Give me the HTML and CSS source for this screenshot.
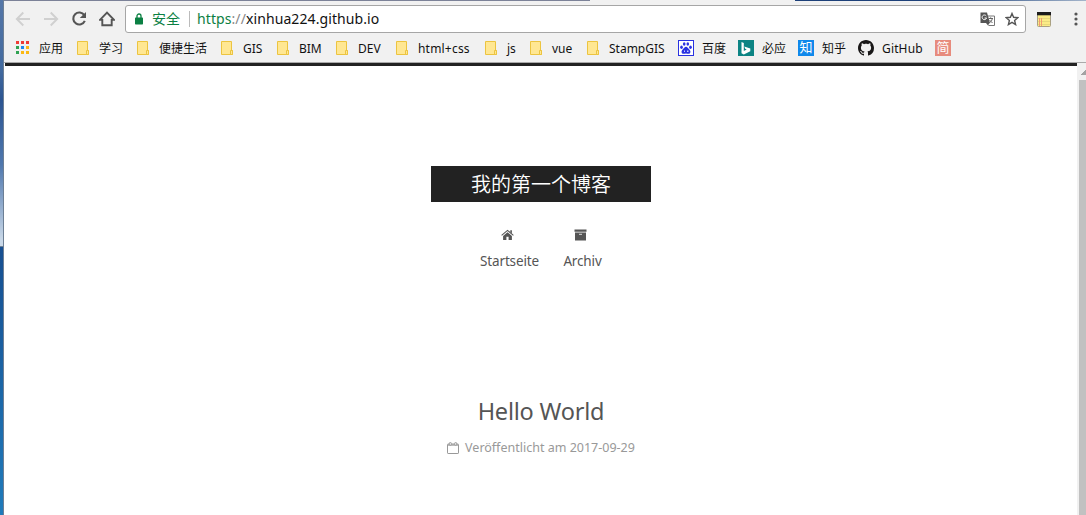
FILE: index.html
```
<!DOCTYPE html>
<html lang="de">
<head>
<meta charset="utf-8">
<title>我的第一个博客</title>
<link rel="stylesheet" href="styles.css">
</head>
<body>
<svg class="defs" width="0" height="0" aria-hidden="true">
  <symbol id="folder" viewBox="0 0 16 16"><path d="M2.500 1.500h10v9h1v4h-11z" fill="#ffe793" stroke="#ecc440"/><path d="M11.500 14.500v-4h2v4z" fill="#ffe793" stroke="#ecc440"/></symbol>
</svg>
<div class="screen">
  <div class="desktop"><div class="desktop-top"></div><div class="desktop-bottom"></div></div>
  <div class="browser">
    <div class="frame"><span class="frame-a"></span><span class="frame-tab"></span><span class="frame-b"></span></div>
    <div class="toolbar">
      <svg class="nav" width="16" height="16" viewBox="0 0 16 16"><path d="M15 8H2M8.300 1.500L1.800 8l6.500 6.500" fill="none" stroke="#d0d0d0" stroke-width="1.900"/></svg>
      <svg class="nav" width="16" height="16" viewBox="0 0 16 16"><path d="M1 8h13M7.700 1.500L14.200 8l-6.500 6.500" fill="none" stroke="#d0d0d0" stroke-width="1.900"/></svg>
      <svg class="nav" width="16" height="16" viewBox="0 0 16 16"><path d="M13.300 4.200A6 6 0 1 0 13.800 9.900" fill="none" stroke="#555" stroke-width="2.100"/><path d="M15 .9v6.200H8.800z" fill="#555"/></svg>
      <svg class="nav" width="16" height="16" viewBox="0 0 16 16"><path d="M1 8.900L8 1.700l7 7.200h-2.300v5.400H3.300V8.900z" fill="none" stroke="#555" stroke-width="1.900"/></svg>
      <div class="omnibox">
        <svg class="lock" width="8" height="12" viewBox="0 0 8 12"><path d="M2 5V3a2 2 0 0 1 4 0v2" fill="none" stroke="#0b8043" stroke-width="1.300"/><rect y="4.500" width="8" height="7" rx=".7" fill="#0b8043"/></svg>
        <span class="secure">安全</span>
        <span class="url"><span class="scheme">https</span><span class="slashes">://</span>xinhua224.github.io</span>
        <svg class="translate" width="15" height="15" viewBox="0 0 15 15"><path d="M7 4h7.500v9.500H8.500" fill="#fff" stroke="#777"/><path d="M.5.500h6.500l3 10.500H.5z" fill="#555"/><path d="M6.300 4A2.300 2.300 0 1 0 6.600 6H4.500" fill="none" stroke="#fff" stroke-width="1"/><path d="M8.500 6.500h4.500M10.700 5.300v1.200M12.300 6.500C12 9 10.500 10 9 11M9.500 8l3 3" fill="none" stroke="#666"/><path d="M6 11h3.500L8 13.500z" fill="#555"/></svg>
        <svg class="star" width="14" height="14" viewBox="0 0 14 14"><path d="M7 1.500l1.600 3.800 4.200.4-3.200 2.800 1 4.100L7 10.400l-3.600 2.200 1-4.100L1.200 5.700l4.200-.4z" fill="none" stroke="#555" stroke-width="1.400"/></svg>
      </div>
      <svg class="notes" width="14" height="15" viewBox="0 0 14 15"><rect x=".5" y=".5" width="13" height="14" rx="1" fill="#fbec87" stroke="#aaa183"/><path d="M0 0h14v3.300H0z" fill="#1c1c1c"/><path d="M1 6.500h12M1 9.500h12M1 12.500h12" stroke="#e6d97c"/><path d="M2.500 6v8M4.500 6v8" stroke="#f29b72"/></svg>
      <svg class="more" width="4" height="14" viewBox="0 0 4 14"><circle cx="2" cy="2" r="1.600" fill="#555"/><circle cx="2" cy="7" r="1.600" fill="#555"/><circle cx="2" cy="12" r="1.600" fill="#555"/></svg>
    </div>
    <div class="bookmarks">
      <div class="mark"><svg width="16" height="16" viewBox="0 0 16 16"><path d="M1 1h3v3H1zM6 1h3v3H6zM11 1h3v3h-3z" fill="#f03c36"/><path d="M1 6h3v3H1zM1 11h3v3H1z" fill="#2fa252"/><path d="M6 6h3v3H6z" fill="#1e88f0"/><path d="M11 6h3v3h-3zM6 11h3v3H6zM11 11h3v3h-3z" fill="#fbb813"/></svg><span class="w24">应用</span></div>
      <div class="mark"><svg width="16" height="16"><use href="#folder"/></svg><span class="w24">学习</span></div>
      <div class="mark"><svg width="16" height="16"><use href="#folder"/></svg><span class="w48">便捷生活</span></div>
      <div class="mark"><svg width="16" height="16"><use href="#folder"/></svg><span class="w20">GIS</span></div>
      <div class="mark"><svg width="16" height="16"><use href="#folder"/></svg><span class="w23">BIM</span></div>
      <div class="mark"><svg width="16" height="16"><use href="#folder"/></svg><span class="w24">DEV</span></div>
      <div class="mark"><svg width="16" height="16"><use href="#folder"/></svg><span class="w53">html+css</span></div>
      <div class="mark"><svg width="16" height="16"><use href="#folder"/></svg><span class="w9">js</span></div>
      <div class="mark"><svg width="16" height="16"><use href="#folder"/></svg><span class="w21">vue</span></div>
      <div class="mark"><svg width="16" height="16"><use href="#folder"/></svg><span class="w57">StampGIS</span></div>
      <div class="mark"><svg width="16" height="16" viewBox="0 0 16 16"><rect x=".5" y=".5" width="15" height="15" fill="#fff" stroke="#2932e1"/><g fill="#2932e1"><ellipse cx="3.500" cy="7.300" rx="1.300" ry="1.700"/><ellipse cx="6.200" cy="4" rx="1.300" ry="1.800"/><ellipse cx="9.800" cy="4" rx="1.300" ry="1.800"/><ellipse cx="12.500" cy="7.300" rx="1.300" ry="1.700"/><path d="M8 6.800c1.500 0 2 1.500 3.300 2.700 2 1.800 1.200 4.300-.8 4.300-1 0-1.500-.3-2.500-.3s-1.500.3-2.500.3c-2 0-2.800-2.500-.8-4.300C6 8.300 6.500 6.800 8 6.800z"/></g><path d="M6 10.500h1v1.500H6zM9 10.500h1.500V12H9z" fill="#c8caff"/></svg><span class="w24">百度</span></div>
      <div class="mark"><svg width="16" height="16" viewBox="0 0 16 16"><path d="M0 0h16v16H0z" fill="#0c8484"/><path d="M3.500 2l2.300.9v8.200l2.900-1.700-1.500-.7-.9-2.300 6 2.200v2.600L5.800 14.500l-2.300-1.300z" fill="#fff"/></svg><span class="w24">必应</span></div>
      <div class="mark"><span class="tile zhihu">知</span><span class="w24">知乎</span></div>
      <div class="mark"><svg width="16" height="16" viewBox="0 0 16 16"><path fill="#191717" d="M8 0C3.580 0 0 3.580 0 8c0 3.540 2.290 6.530 5.470 7.590.4.070.55-.17.55-.38 0-.19-.01-.82-.01-1.490-2.010.37-2.530-.49-2.690-.94-.09-.23-.48-.94-.82-1.130-.28-.15-.68-.52-.01-.53.63-.01 1.080.58 1.230.82.72 1.210 1.870.87 2.330.66.070-.52.28-.87.510-1.070-1.780-.2-3.640-.89-3.640-3.950 0-.87.310-1.590.82-2.150-.08-.2-.36-1.020.08-2.120 0 0 .67-.21 2.200.82.640-.18 1.320-.27 2-.27s1.360.09 2 .27c1.530-1.040 2.200-.82 2.200-.82.440 1.100.16 1.920.08 2.120.51.560.82 1.270.82 2.150 0 3.070-1.870 3.750-3.650 3.950.29.250.54.730.54 1.480 0 1.070-.01 1.930-.01 2.200 0 .21.150.46.550.38A8 8 0 0 0 16 8c0-4.420-3.580-8-8-8z"/></svg><span class="w41">GitHub</span></div>
      <div class="mark"><span class="tile jian">简</span></div>
    </div>
    <div class="viewport">
      <main class="page">
        <header class="brand">我的第一个博客</header>
        <nav class="menu">
          <a class="home"><svg width="13" height="12" viewBox="0 0 13 12"><path d="M6.500 3.200l4.400 3.700V11H7.600V7.800H5.400V11H2.100V6.900z" fill="#555"/><path d="M.6 6.300l5.900-4.900 5.900 4.900" fill="none" stroke="#555" stroke-width="1.100"/><path d="M9.300 1.200h1.600v3.300L9.300 3z" fill="#555"/></svg><span>Startseite</span></a>
          <a class="archive"><svg width="13" height="12" viewBox="0 0 13 12"><path d="M.5.500h12v2.300H.5zM1 3.500h11V11.500H1z" fill="#555"/><path d="M5 5.300h3" stroke="#ddd"/></svg><span>Archiv</span></a>
        </nav>
        <article class="post">
          <h1>Hello World</h1>
          <p><svg width="12" height="12" viewBox="0 0 12 12"><rect x=".5" y="2" width="11" height="9.500" rx=".6" fill="none" stroke="#999"/><path d="M1 3h10" stroke="#999" stroke-width="1.300"/><rect x="2.400" y=".5" width="1.900" height="2.800" rx=".7" fill="#eee" stroke="#999" stroke-width=".9"/><rect x="7.700" y=".5" width="1.900" height="2.800" rx=".7" fill="#eee" stroke="#999" stroke-width=".9"/></svg><span>Veröffentlicht am 2017-09-29</span></p>
        </article>
      </main>
      <div class="scrollbar"><div class="arrow"></div><div class="thumb"></div></div>
    </div>
  </div>
</div>
</body>
</html>
```
FILE: styles.css
```
* { box-sizing: border-box; }
body { margin: 0; overflow: hidden; font-family: "Noto Sans", "Noto Sans CJK SC", sans-serif; }
svg { display: block; flex: none; }
.defs { position: absolute; }
.screen { display: flex; width: 1086px; height: 515px; overflow: hidden; background: #fff; }
.desktop { display: flex; flex-direction: column; width: 4px; border-right: 1px solid #6d7f94; }
.desktop-top { height: 247px; border-bottom: 1px solid #6d7f94; background: linear-gradient(#5577a8 0, #426a9f 70px, #2c5592 100px, #5078ae 165px, #c9d8e8 240px); }
.desktop-bottom { flex: 1; background: linear-gradient(#174f91, #207bbb); }
.browser { display: flex; flex-direction: column; width: 1082px; }
.frame { display: flex; flex: none; height: 1px; }
.frame-a { width: 586px; background: #7c8298; }
.frame-tab { width: 205px; background: #f1f1f1; }
.frame-b { flex: 1; background: linear-gradient(90deg, #1d4079, #1d4079 50%, #a4b5cb); }
.toolbar { display: flex; flex: none; align-items: center; height: 36px; padding-left: 11px; background: #f1f1f1; }
.nav { margin-right: 12px; }
.omnibox { display: flex; align-items: center; width: 901px; height: 28px; margin-left: -2px; padding-left: 9px; background: #fff; border: 1px solid #a6a6a6; border-radius: 3px; }
.lock { margin-right: 9px; }
.secure { width: 38px; height: 16px; border-right: 1px solid #bbb; color: #0b8043; font-size: 14px; line-height: 16px; white-space: nowrap; }
.url { flex: 1; padding-left: 7px; font-size: 14px; line-height: 20px; letter-spacing: .09px; color: #111; white-space: nowrap; }
.scheme { color: #0b8043; }
.slashes { color: #888; }
.translate { margin-right: 10px; }
.star { margin-right: 6px; }
.notes { margin-left: 11px; }
.more { margin-left: 23px; }
.bookmarks { display: flex; flex: none; height: 26px; padding: 3px 0 0 11px; background: #f1f1f1; border-bottom: 1px solid #aaa; }
.mark { display: flex; height: 16px; gap: 8px; margin-right: 12px; font-size: 12px; line-height: 17px; color: #111; white-space: nowrap; }
.w9 { width: 9px; } .w20 { width: 20px; } .w21 { width: 21px; } .w23 { width: 23px; } .w24 { width: 24px; }
.w41 { width: 41px; letter-spacing: .15px; } .w48 { width: 48px; } .w53 { width: 53px; letter-spacing: .2px; } .w57 { width: 57px; }
.tile { width: 16px; height: 16px; color: #fff; font-size: 13px; line-height: 15px; text-align: center; }
.zhihu { background: #0f88eb; }
.jian { background: #e78b7d; }
.viewport { display: flex; flex: 1; min-height: 0; }
.page { display: flex; flex-direction: column; align-items: center; width: 1072px; margin-left: 1px; padding-top: 100px; border-top: 3px solid #222; background: #fff; color: #555; }
.brand { width: 220px; height: 36px; background: #222; color: #fff; font-size: 20px; font-weight: 350; line-height: 38px; text-align: center; }
.menu { display: flex; gap: 24px; margin-top: 27px; font-size: 13.500px; line-height: 20px; letter-spacing: -.15px; }
.menu a { display: flex; flex-direction: column; align-items: center; gap: 10px; white-space: nowrap; }
.home { width: 59px; }
.archive { width: 39px; }
.home svg { margin-left: -5px; }
.archive svg { margin-left: -4px; }
.post { margin-top: 123px; text-align: center; }
.post h1 { margin: 0; font-size: 23.500px; font-weight: 400; line-height: 34px; letter-spacing: -.2px; }
.post p { display: flex; justify-content: center; align-items: center; gap: 6px; margin: 11px 0 0; color: #999; font-size: 12.5px; line-height: 18px; }
.scrollbar { display: flex; flex-direction: column; width: 9px; background: #f1f1f1; }
.arrow { flex: none; width: 5px; height: 5px; margin: 7px 0 5px 4px; background: linear-gradient(135deg, transparent 50%, #a3a3a3 50%); }
.thumb { flex: 1; margin-left: 2px; background: #c1c1c1; }
```
